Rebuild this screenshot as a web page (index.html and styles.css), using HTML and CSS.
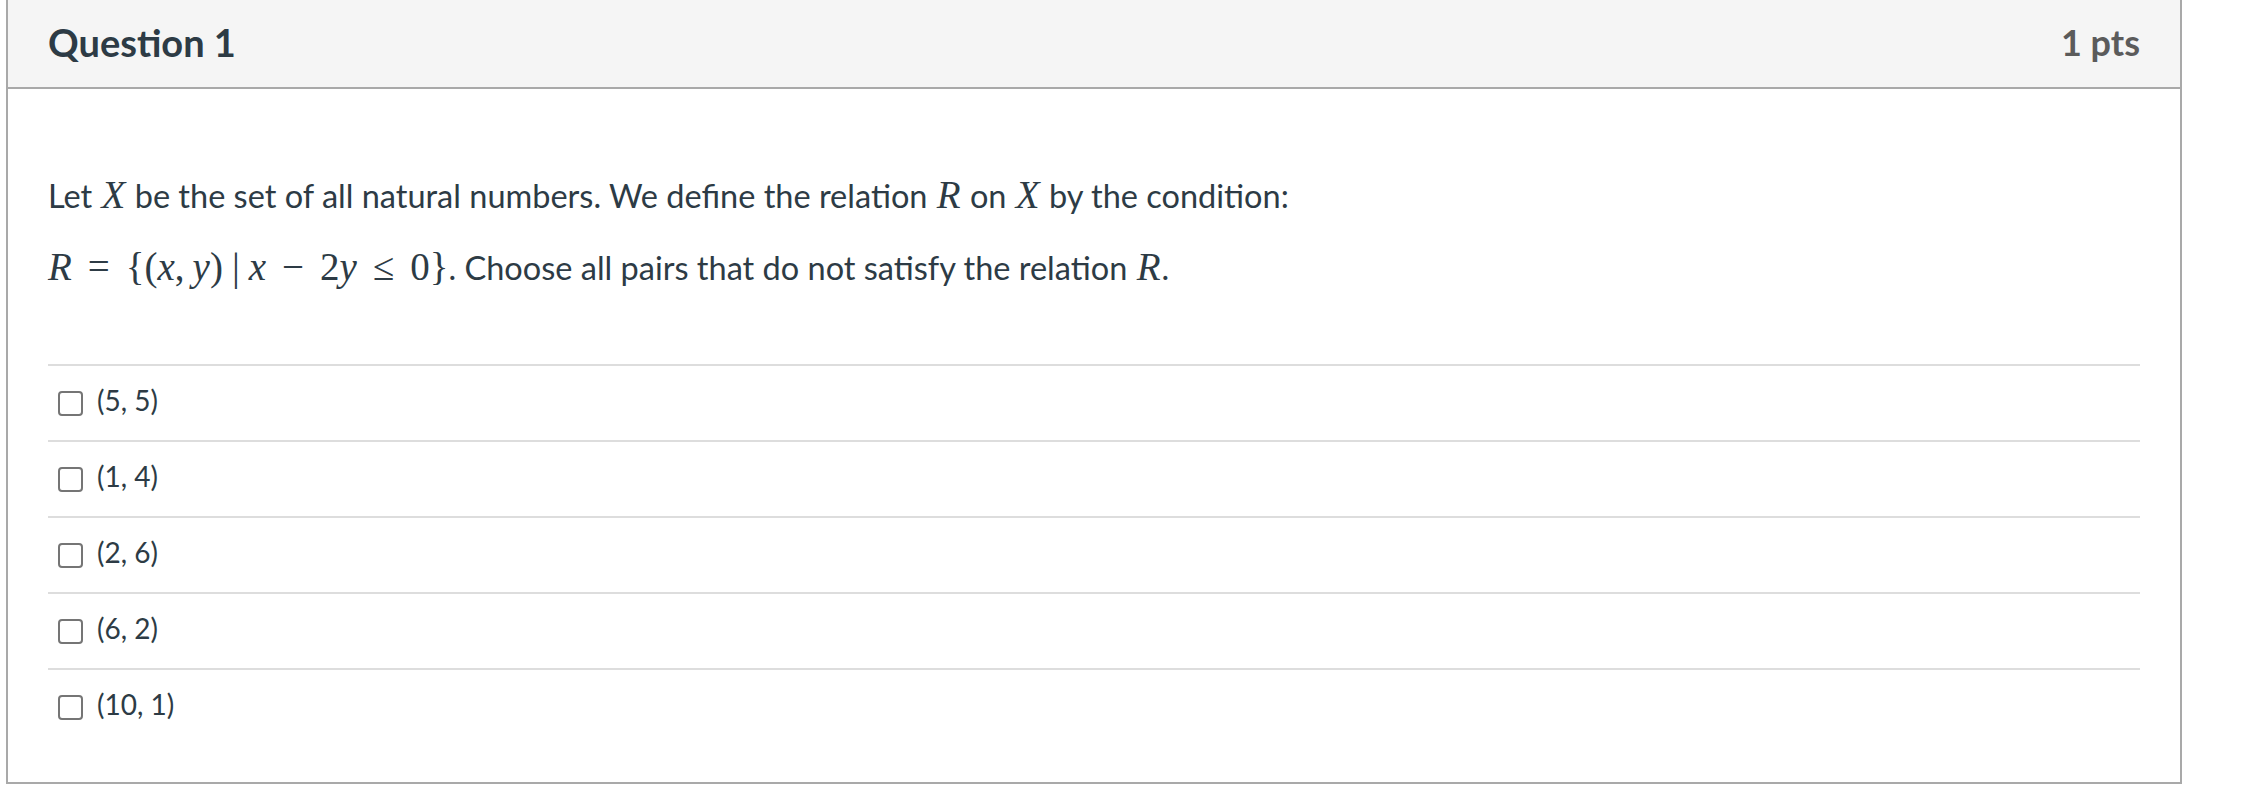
FILE: index.html
```html
<!DOCTYPE html>
<html lang="en">
<head>
<meta charset="utf-8">
<title>Question 1</title>
<link rel="stylesheet" href="styles.css">
</head>
<body>
<div class="card">
  <div class="qheader">
    <h2 class="qtitle">Question 1</h2>
    <span class="qpts">1 pts</span>
  </div>
  <div class="qbody">
    <div class="qtext">
      <p>Let <span class="m mi mv">X</span> be the set of all natural numbers. We define the relation <span class="m mi mv">R</span> on <span class="m mi mv">X</span> by the condition:</p>
      <p><span class="m"><span class="mi">R</span><span class="rel">=</span><span>{(</span><span class="mi">x</span><span class="punct">,</span><span class="mi">y</span><span>)</span><span class="mid">|</span><span class="mi">x</span><span class="bin">−</span><span>2</span><span class="mi">y</span><span class="rel">≤</span><span>0</span><span>}</span></span>. Choose all pairs that do not satisfy the relation <span class="m mi mv">R</span>.</p>
    </div>
    <div class="answers">
      <label class="answer"><span class="cb"></span><span class="atext">(5, 5)</span></label>
      <label class="answer"><span class="cb"></span><span class="atext">(1, 4)</span></label>
      <label class="answer"><span class="cb"></span><span class="atext">(2, 6)</span></label>
      <label class="answer"><span class="cb"></span><span class="atext">(6, 2)</span></label>
      <label class="answer"><span class="cb"></span><span class="atext">(10, 1)</span></label>
    </div>
  </div>
</div>
</body>
</html>
```
FILE: styles.css
```css
body {
  margin: 0;
  background: #ffffff;
  font-family: Lato, "Open Sans", sans-serif;
  color: #2d3b45;
}

.card {
  margin-left: 6px;
  width: 2176px;
  box-sizing: border-box;
  border: 2px solid #a9a9a9;
  border-top: 0;
}

.qheader {
  height: 89px;
  box-sizing: border-box;
  background: #f5f5f5;
  border-bottom: 2px solid #a9a9a9;
  display: flex;
  align-items: center;
  justify-content: space-between;
  padding: 0 40px 3px;
}

.qtitle {
  margin: 0;
  font-size: 38px;
  font-weight: 700;
  color: #2d3b45;
}

.qpts {
  font-size: 36px;
  font-weight: 700;
  color: #5b5b5b;
}

.qbody {
  padding: 86px 40px 38px;
}

.qtext p {
  margin: 0;
  font-size: 32.5px;
  line-height: 42px;
}

.qtext p + p {
  margin-top: 30px;
}

.m {
  font-family: "Liberation Serif", "Times New Roman", serif;
  font-size: 39px;
  line-height: 38px;
}

.mi {
  font-style: italic;
}

.mv {
  margin: 0 1px;
}

.rel {
  margin: 0 16px;
}

.bin {
  margin: 0 16px;
}

.mid {
  margin: 0 9px;
}

.punct {
  margin-right: 8px;
}

.answers {
  margin-top: 75px;
}

.answer {
  display: flex;
  align-items: center;
  gap: 14px;
  height: 76px;
  box-sizing: border-box;
  border-top: 2px solid #dddddd;
  padding-left: 10px;
  font-size: 28px;
  color: #2d3b45;
}

.atext {
  padding-bottom: 6px;
}

.cb {
  width: 25px;
  height: 25px;
  box-sizing: border-box;
  border: 2px solid #757575;
  border-radius: 4px;
  background: #ffffff;
}
```
